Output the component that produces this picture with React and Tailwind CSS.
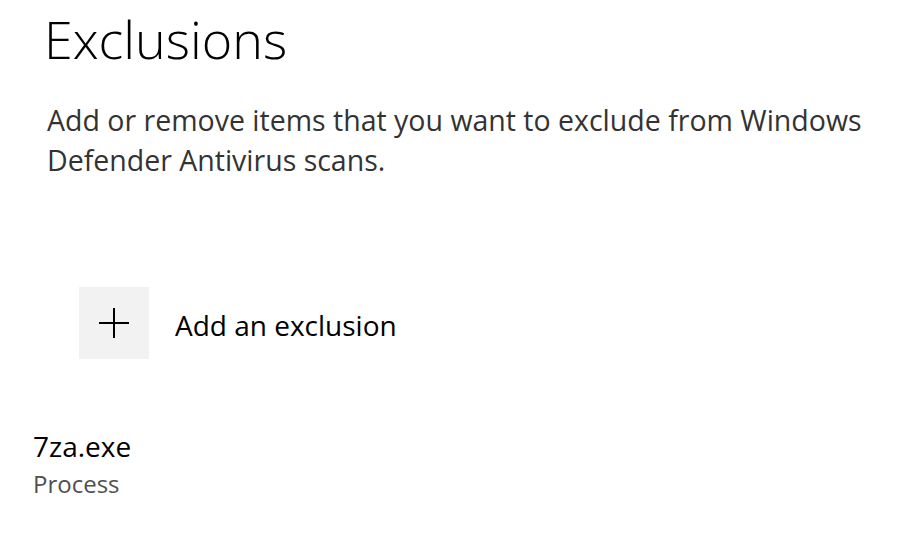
import React from 'react';

const PlusIcon = () => (
  <svg width="32" height="32" viewBox="0 0 32 32" fill="none">
    <path d="M16 1v30M1 16h30" stroke="#000" strokeWidth="2" />
  </svg>
);

export default function App() {
  return (
    <div
      className="w-[916px] h-[534px] bg-white overflow-hidden text-black"
      style={{ fontFamily: '"Open Sans", "Noto Sans", sans-serif' }}
    >
      {/* Header */}
      <h1 className="pl-[44px] pt-[3px] text-[52px] leading-[72px] font-light">Exclusions</h1>
      <p className="pl-[47px] pt-[25px] pr-[20px] text-[28.5px] leading-[40px] text-[#333]">
        Add or remove items that you want to exclude from Windows Defender Antivirus scans.
      </p>

      {/* Add button */}
      <div className="flex items-center pl-[79px] mt-[107px]">
        <button className="w-[70px] h-[72px] bg-[#f2f2f2] flex items-center justify-center">
          <PlusIcon />
        </button>
        <span className="ml-[26px] pt-[4px] text-[28px] leading-[36px]">Add an exclusion</span>
      </div>

      {/* Exclusion list */}
      <div className="pl-[33px] mt-[69px]">
        <div className="text-[28px] leading-[36px]">7za.exe</div>
        <div className="text-[24px] leading-[40px] text-[#505050]">Process</div>
      </div>
    </div>
  );
}
